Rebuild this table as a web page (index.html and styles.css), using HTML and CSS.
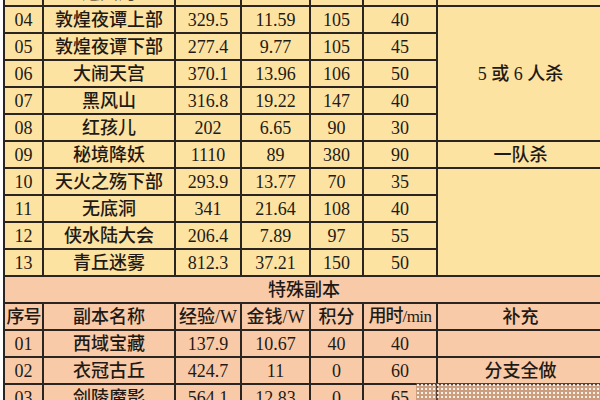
FILE: index.html
```html
<!DOCTYPE html>
<html lang="zh-CN">
<head>
<meta charset="utf-8">
<link rel="stylesheet" href="styles.css">
</head>
<body>
<table class="sheet">
  <colgroup>
    <col class="c-no"><col class="c-name"><col class="c-exp"><col class="c-money"><col class="c-pts"><col class="c-time"><col class="c-note">
  </colgroup>
  <tbody class="normal">
    <tr><td>03</td><td>通天河</td><td>236.9</td><td>8.52</td><td>90</td><td>35</td><td></td></tr>
    <tr><td>04</td><td>敦煌夜谭上部</td><td>329.5</td><td>11.59</td><td>105</td><td>40</td><td rowspan="5">5 或 6 人杀</td></tr>
    <tr><td>05</td><td>敦煌夜谭下部</td><td>277.4</td><td>9.77</td><td>105</td><td>45</td></tr>
    <tr><td>06</td><td>大闹天宫</td><td>370.1</td><td>13.96</td><td>106</td><td>50</td></tr>
    <tr><td>07</td><td>黑风山</td><td>316.8</td><td>19.22</td><td>147</td><td>40</td></tr>
    <tr><td>08</td><td>红孩儿</td><td>202</td><td>6.65</td><td>90</td><td>30</td></tr>
    <tr><td>09</td><td>秘境降妖</td><td>1110</td><td>89</td><td>380</td><td>90</td><td>一队杀</td></tr>
    <tr><td>10</td><td>天火之殇下部</td><td>293.9</td><td>13.77</td><td>70</td><td>35</td><td rowspan="4"></td></tr>
    <tr><td>11</td><td>无底洞</td><td>341</td><td>21.64</td><td>108</td><td>40</td></tr>
    <tr><td>12</td><td>侠水陆大会</td><td>206.4</td><td>7.89</td><td>97</td><td>55</td></tr>
    <tr><td>13</td><td>青丘迷雾</td><td>812.3</td><td>37.21</td><td>150</td><td>50</td></tr>
  </tbody>
  <tbody class="special">
    <tr><td colspan="7">特殊副本</td></tr>
    <tr><td class="tight">序号</td><td>副本名称</td><td>经验/W</td><td>金钱/W</td><td>积分</td><td class="tight">用时<span class="unit">/min</span></td><td>补充</td></tr>
    <tr><td>01</td><td>西域宝藏</td><td>137.9</td><td>10.67</td><td>40</td><td>40</td><td></td></tr>
    <tr><td>02</td><td>衣冠古丘</td><td>424.7</td><td>11</td><td>0</td><td>60</td><td>分支全做</td></tr>
    <tr><td>03</td><td>剑陵魔影</td><td>564.1</td><td>12.83</td><td>0</td><td>65</td><td></td></tr>
  </tbody>
</table>
<div class="veil"></div>
</body>
</html>
```
FILE: styles.css
```css
html, body {
  margin: 0;
  padding: 0;
  background: #ffffff;
  width: 600px;
  height: 400px;
  overflow: hidden;
}
body {
  position: relative;
  font-family: "Liberation Serif", "Noto Sans CJK SC", serif;
  color: #1f1a15;
}
.sheet {
  border-collapse: collapse;
  table-layout: fixed;
  width: 600px;
  margin: -22px 0 0 3px;
  font-size: 18px;
  font-weight: 500;
}
.c-no { width: 39px; }
.c-name { width: 132px; }
.c-exp { width: 66px; }
.c-money { width: 69px; }
.c-pts { width: 53px; }
.c-time { width: 74px; }
.c-note { width: 167px; }
.sheet td {
  border: 2px solid #2a2520;
  text-align: center;
  vertical-align: middle;
  padding: 0;
  white-space: nowrap;
  overflow: hidden;
  line-height: 22px;
}
.sheet tr { height: 27px; }
.normal td { background: #fde3a1; }
.special td { background: #f8caa8; }
.tight { letter-spacing: -1px; }
.unit { font-size: 17px; letter-spacing: -0.5px; }
.veil {
  position: absolute;
  left: 416px;
  top: 383px;
  width: 184px;
  height: 17px;
  background-color: rgba(150, 105, 75, 0.45);
  background-image: radial-gradient(circle, rgba(255, 255, 255, 0.85) 0.8px, transparent 1.2px);
  background-size: 4px 4px;
}
```
